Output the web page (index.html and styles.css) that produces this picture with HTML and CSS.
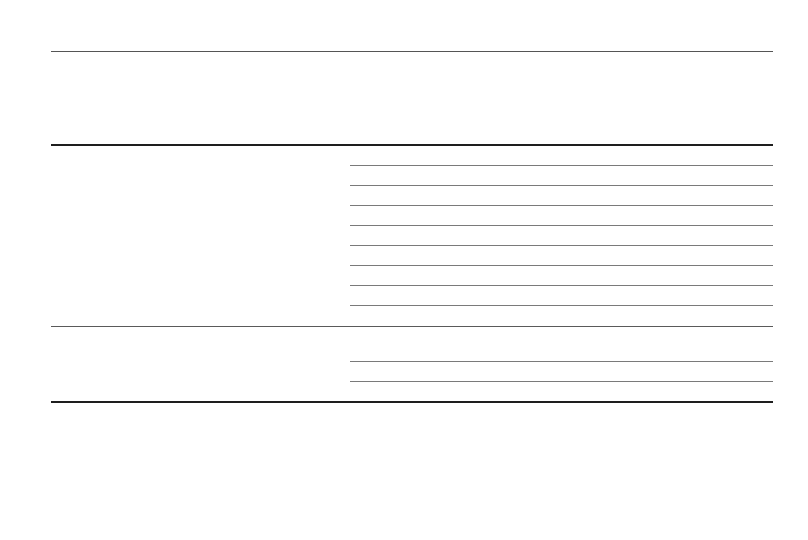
FILE: index.html
```html
<!DOCTYPE html>
<html lang="en">
<head>
<meta charset="utf-8">
<title>Table</title>
<link rel="stylesheet" href="styles.css">
</head>
<body>
<div class="page">
  <div class="header"></div>
  <div class="table">
    <div class="group">
      <div class="label"></div>
      <div class="rows">
        <div class="row"></div>
        <div class="row"></div>
        <div class="row"></div>
        <div class="row"></div>
        <div class="row"></div>
        <div class="row"></div>
        <div class="row"></div>
        <div class="row"></div>
        <div class="row"></div>
      </div>
    </div>
    <div class="group">
      <div class="label"></div>
      <div class="rows">
        <div class="row tall"></div>
        <div class="row"></div>
        <div class="row"></div>
      </div>
    </div>
  </div>
</div>
</body>
</html>
```
FILE: styles.css
```css
html, body {
  margin: 0;
  padding: 0;
  background: #ffffff;
  font-family: "Liberation Sans", Arial, sans-serif;
}
.page {
  width: 722px;
  padding: 51px 0 0 51px;
}
.header {
  border-top: 1px solid #555555;
  height: 92px;
}
.table {
  border-top: 2px solid #1e1e1e;
  border-bottom: 2px solid #1e1e1e;
}
.group {
  display: flex;
}
.group + .group {
  border-top: 1px solid #5a5a5a;
}
.label {
  width: 299px;
  flex: none;
}
.rows {
  flex: 1;
}
.row {
  height: 19px;
  border-bottom: 1px solid #7a7a7a;
}
.row:last-child {
  height: 20px;
  border-bottom: none;
}
.row.tall {
  height: 34px;
}
.group:last-child .row:last-child {
  height: 19px;
}
```
